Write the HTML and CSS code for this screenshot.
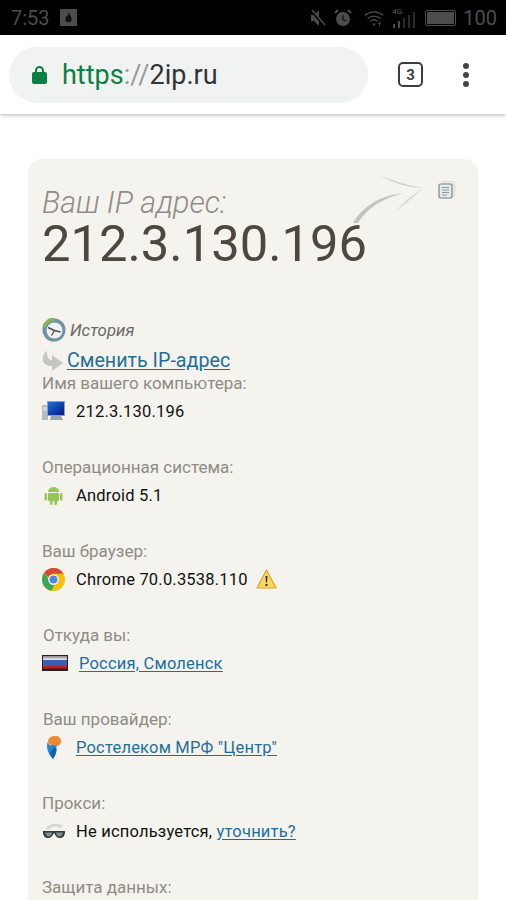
FILE: index.html
```html
<!DOCTYPE html>
<html lang="en">
<head>
  <meta charset="UTF-8">
  <title>2ip.ru</title>
  <link rel="stylesheet" href="styles.css">
</head>
<body>
  <div class="status-bar">
    <div class="status-left">
      <span class="clock">7:53</span>
      <span class="notif">
        <svg width="17" height="17" viewBox="0 0 16 16"><rect width="16" height="16" fill="#4c4c4c"/><path d="M8 3c.5 2 3 3.500 3 6.500a3 3 0 0 1-6 0C5 8 6 7.500 6.300 6.500 7 7 7.500 5 8 3z" fill="#111"/></svg>
      </span>
    </div>
    <div class="status-right">
      <svg width="16" height="18" viewBox="0 0 16 18"><path d="M1 6h3l5-5v16l-5-5H1z" fill="#4c4c4c"/><path d="M1 1l14 16" stroke="#000" stroke-width="3"/><path d="M2 1l13 15" stroke="#4c4c4c" stroke-width="1.500"/></svg>
      <svg width="18" height="18" viewBox="0 0 18 18"><circle cx="9" cy="10" r="7" fill="#4c4c4c"/><path d="M9 6v4.500l3 1.500" stroke="#111" stroke-width="1.300" fill="none"/><path d="M1 4l3-3M17 4l-3-3" stroke="#4c4c4c" stroke-width="2"/></svg>
      <svg class="wifi" width="20" height="18" viewBox="0 0 22 18"><path d="M1 6c6-5 14-5 20 0M4 9.500c4-3.500 10-3.500 14 0M7 12.500c2.500-2 5.500-2 8 0" stroke="#4c4c4c" stroke-width="1.500" fill="none"/><path d="M9 15h4l-2 3z" fill="#4c4c4c"/><path d="M17 18v-4l-1.500 1.500M17 14l1.500 1.500" stroke="#4c4c4c" fill="none"/></svg>
      <span class="signal">
        <span class="net">4G</span>
        <svg width="24" height="16" viewBox="0 0 24 16"><path d="M1 12h2v4H1zM6 9h2v7H6z" fill="#4c4c4c"/><path d="M11 6h2v10h-2zM16 3h2v13h-2zM21 0h2v16h-2z" fill="#2b2b2b"/></svg>
      </span>
      <span class="battery"><span class="battery-fill"></span></span>
      <span class="level">100</span>
    </div>
  </div>

  <div class="toolbar">
    <div class="omnibox">
      <svg class="lock" width="15" height="19" viewBox="0 0 15 19"><path d="M4 8V5.500a3.500 3.500 0 0 1 7 0V8" stroke="#0b8043" stroke-width="2" fill="none"/><rect y="7" width="15" height="12" rx="2" fill="#0b8043"/></svg>
      <span class="url"><span class="scheme">https</span><span class="slashes">://</span>2ip.ru</span>
    </div>
    <span class="tabs">3</span>
    <span class="menu"><i></i><i></i><i></i></span>
  </div>

  <div class="page">
    <div class="card">
      <svg class="arrow" width="92" height="70" viewBox="0 0 92 70">
        <path d="M8 50C18 33 36 22 59 20C38 25 22 35 13 50z" fill="#c4c3be"/>
        <path d="M35 2C50 9 62 12 78 15C62 14 47 10 35 2z" fill="#cfcec9"/>
        <path d="M78 15C68 24 60 31 50 39C58 30 67 22 78 15z" fill="#d6d5d0"/>
      </svg>
      <svg class="copy" width="18" height="18" viewBox="0 0 18 18">
        <rect x="4" y="0.500" width="13" height="14" rx="1" fill="#e9e9e6" stroke="#e0e0dc"/>
        <rect x="1" y="3" width="13" height="14" rx="1.500" fill="#e8eaea" stroke="#76848a" stroke-width="1.200"/>
        <path d="M4 6.500h7M4 9h7M4 11.500h7M4 14h5" stroke="#8b979c"/>
      </svg>

      <div class="ip-title">Ваш IP адрес:</div>
      <div class="ip-big">212.3.130.196</div>

      <div class="tool-link history">
        <svg width="24" height="24" viewBox="0 0 24 24"><circle cx="12" cy="12" r="11.500" fill="#6f93a6"/><circle cx="12.500" cy="12.500" r="8" fill="#eef2f3"/><path d="M2 9A11 11 0 0 1 13 1" stroke="#86b55f" stroke-width="3.500" fill="none"/><path d="M12.500 12.500L6 9.500M12.500 12.500l6 1.500M12.500 12.500l-3 5" stroke="#54504f" stroke-width="1.400"/></svg>
        <em>История</em>
      </div>
      <div class="tool-link change">
        <svg width="22" height="21" viewBox="0 0 22 21"><path d="M5 1C2 3 0 7 1 11c1 3 4 5 9 5v5l11-8-11-8v5C7 10 5 8 5 1z" fill="#c6c5c1"/></svg>
        <a href="#">Сменить IP-адрес</a>
      </div>

      <div class="info first">
        <div class="label">Имя вашего компьютера:</div>
        <div class="value">
          <span class="ico">
            <svg width="24" height="20" viewBox="0 0 24 20">
              <defs><linearGradient id="screen" x1="0" y1="0" x2="1" y2="1"><stop offset="0" stop-color="#1f6fe0"/><stop offset="1" stop-color="#061a7a"/></linearGradient></defs>
              <rect x="0" y="4" width="6" height="15" fill="#b4bcbf"/>
              <path d="M1 7h4M1 9h4" stroke="#eef0f0"/>
              <rect x="5" y="0" width="18" height="15" fill="#8fa0b0"/>
              <rect x="6" y="1" width="16" height="13" fill="url(#screen)"/>
              <path d="M9 15h10l2 4H8z" fill="#9aa4a8"/>
            </svg>
          </span>
          <span>212.3.130.196</span>
        </div>
      </div>

      <div class="info">
        <div class="label">Операционная система:</div>
        <div class="value">
          <span class="ico"><svg class="droid" width="19" height="20" viewBox="0 0 19 20" fill="#96c654"><path d="M4 7a5.500 5 0 0 1 11 0z"/><rect x="4" y="8" width="11" height="8" rx="1"/><rect x="0.500" y="8" width="2.500" height="7.500" rx="1.200"/><rect x="16" y="8" width="2.500" height="7.500" rx="1.200"/><rect x="6" y="15" width="2.500" height="5" rx="1.200"/><rect x="10.500" y="15" width="2.500" height="5" rx="1.200"/></svg></span>
          <span>Android 5.1</span>
        </div>
      </div>

      <div class="info">
        <div class="label">Ваш браузер:</div>
        <div class="value">
          <span class="ico"><svg width="23" height="23" viewBox="0 0 24 24"><circle cx="12" cy="12" r="12" fill="#f4c20d"/><path d="M12 0a12 12 0 0 1 10.400 6H12a6 6 0 0 0-5.600 3.800L2.500 4.800A12 12 0 0 1 12 0z" fill="#db4437"/><path d="M2.500 4.800l5 8.700a5 5 0 0 0 5.500 4.400L9.500 23.800A12 12 0 0 1 2.500 4.800z" fill="#3aa757"/><circle cx="12" cy="12" r="5.500" fill="#fff"/><circle cx="12" cy="12" r="4.200" fill="#4f84e8"/></svg></span>
          <span>Chrome 70.0.3538.110</span>
          <svg class="warn" width="21" height="20" viewBox="0 0 21 20"><path d="M10.500 1L20 19H1z" fill="#fbd75b" stroke="#d9a520" stroke-width="1.200" stroke-linejoin="round"/><path d="M9.500 7h2l-.4 6.500h-1.200zM9.500 15h2v2h-2z" fill="#333"/></svg>
        </div>
      </div>

      <div class="info shifted">
        <div class="label">Откуда вы:</div>
        <div class="value">
          <span class="flag"><i class="w"></i><i class="b"></i><i class="r"></i></span>
          <a href="#">Россия, Смоленск</a>
        </div>
      </div>

      <div class="info shifted">
        <div class="label">Ваш провайдер:</div>
        <div class="value">
          <span class="ico isp"><svg width="14" height="23" viewBox="0 0 14 23"><path d="M1 6C1 2 4 0 8 0c4 0 6 2 6 5 0 3-2 5-5 6-1-3-3-3-4-2-1 .8-2.500 0-4-3z" fill="#ee8a32"/><path d="M1 6c.5 3 2 4 4 3 1-.8 3-1 4 2 1.500 4-1 9-3 12C3 20 0 15 0 10c0-1.500.3-3 1-4z" fill="#1f86cf"/><path d="M9 11c1.500 4-1 9-3 12-1.500-2-2.500-4-3-6 2-3 3-5 6-6z" fill="#175fa8"/></svg></span>
          <a href="#">Ростелеком МРФ "Центр"</a>
        </div>
      </div>

      <div class="info">
        <div class="label">Прокси:</div>
        <div class="value">
          <span class="ico"><svg width="24" height="15" viewBox="0 0 24 15"><path d="M5 5C8 1 15 0 20 3" stroke="#d4d7d7" stroke-width="3" fill="none"/><path d="M1 7h22v2c-.5 3-2 5-5 5s-4.500-2-5.500-4.500h-1C10.500 12 9 14 6 14S1.500 12 1 9z" fill="#333b3d"/><path d="M3 8.500h7c0 2-1.500 4-3.500 4S3.500 10.500 3 8.500zM14 8.500h7c-.5 2-1.500 4-3.500 4S14 10.500 14 8.500z" fill="#7f8a8b"/></svg></span>
          <span>Не используется, <a href="#">уточнить?</a></span>
        </div>
      </div>

      <div class="info">
        <div class="label">Защита данных:</div>
      </div>
    </div>
  </div>
</body>
</html>
```

FILE: styles.css
```css
html, body {
  margin: 0;
  padding: 0;
}
body {
  width: 506px;
  height: 900px;
  overflow: hidden;
  background-color: #fff;
  font-family: Roboto, "Liberation Sans", sans-serif;
  color: #111;
}
a {
  color: #1f6f9c;
  text-decoration: underline;
  text-underline-offset: 2px;
}

/* android status bar */
.status-bar {
  height: 35px;
  background-color: #000;
  color: #4c4c4c;
  display: flex;
  justify-content: space-between;
  align-items: center;
  padding: 0 9px 0 11px;
  box-sizing: border-box;
}
.status-left,
.status-right {
  display: flex;
  align-items: center;
}
.clock {
  font-size: 20px;
  margin-right: 10px;
}
.notif {
  display: flex;
}
.status-right svg {
  display: block;
}
.status-right {
  gap: 8px;
}
.wifi {
  margin-left: 4px;
}
.signal {
  position: relative;
  width: 24px;
  height: 20px;
  display: flex;
  align-items: flex-end;
}
.net {
  position: absolute;
  left: 0;
  top: -1px;
  font-size: 8px;
  color: #5c5c5c;
}
.battery {
  width: 27px;
  height: 12px;
  border: 1px solid #4c4c4c;
  border-radius: 2px;
  padding: 1px;
  margin-left: 1px;
}
.battery-fill {
  display: block;
  height: 100%;
  background-color: #4c4c4c;
}
.level {
  font-size: 20px;
  margin-left: -1px;
}

/* chrome toolbar */
.toolbar {
  height: 79px;
  background-color: #fff;
  display: flex;
  align-items: center;
  box-shadow: 0 1px 4px rgba(0, 0, 0, 0.3);
  position: relative;
  padding-left: 9px;
  box-sizing: border-box;
}
.omnibox {
  width: 359px;
  height: 56px;
  border-radius: 28px;
  background-color: #f0f3f2;
  display: flex;
  align-items: center;
  padding-left: 23px;
  box-sizing: border-box;
}
.lock {
  margin-right: 15px;
}
.url {
  font-size: 27px;
  color: #333;
}
.scheme {
  color: #0b8043;
}
.slashes {
  color: #999;
}
.tabs {
  width: 21px;
  height: 21px;
  margin-left: 30px;
  border: 2px solid #3c3c3c;
  border-radius: 5px;
  font-size: 15px;
  font-weight: 700;
  color: #3c3c3c;
  display: flex;
  align-items: center;
  justify-content: center;
}
.menu {
  margin-left: 40px;
  display: flex;
  flex-direction: column;
  gap: 3px;
}
.menu i {
  width: 6px;
  height: 6px;
  border-radius: 50%;
  background-color: #444;
}

/* page */
.page {
  padding: 45px 28px 0;
}
.card {
  position: relative;
  background-color: #f4f3ee;
  border-radius: 14px;
  padding: 25px 14px 0 14px;
  height: 800px;
}
.arrow {
  position: absolute;
  left: 317px;
  top: 14px;
}
.copy {
  position: absolute;
  left: 410px;
  top: 22px;
}
.ip-title {
  font-size: 30.5px;
  line-height: 38px;
  font-weight: 300;
  font-style: italic;
  color: #8f8c84;
}
.ip-big {
  font-size: 50.7px;
  line-height: 44px;
  color: #4d473d;
  margin-bottom: 49px;
}
.tool-link {
  display: flex;
  align-items: center;
  gap: 4px;
  height: 30px;
}
.history em {
  font-size: 16.8px;
  color: #6b6a66;
}
.change {
  gap: 3px;
  height: 25px;
  margin-top: 3px;
}
.change a {
  font-size: 19.7px;
}
.info {
  padding-bottom: 30px;
}
.label {
  font-size: 17px;
  line-height: 20px;
  color: #8f8c84;
  margin-bottom: 2px;
}
.value {
  display: flex;
  align-items: center;
  height: 32px;
  font-size: 16.5px;
  letter-spacing: 0.2px;
}
.ico {
  width: 34px;
  display: flex;
  align-items: center;
  flex-shrink: 0;
}
.droid {
  margin-left: 2px;
  margin-right: -2px;
}
.isp {
  padding-left: 5px;
  width: 29px;
}
.warn {
  margin-left: 8px;
}
.shifted .label {
  margin-left: 1px;
}
.flag {
  width: 26px;
  height: 16px;
  margin-right: 11px;
  display: flex;
  flex-direction: column;
  border: 1px solid #222;
  border-width: 1px 1px 2px;
  box-sizing: border-box;
}
.flag i {
  flex: 1;
}
.flag .w {
  background: linear-gradient(#8a8a8a, #f0f0f2);
}
.flag .b {
  background-color: #3b5fb5;
}
.flag .r {
  background: linear-gradient(#d22c33, #8a1a20);
}
```
